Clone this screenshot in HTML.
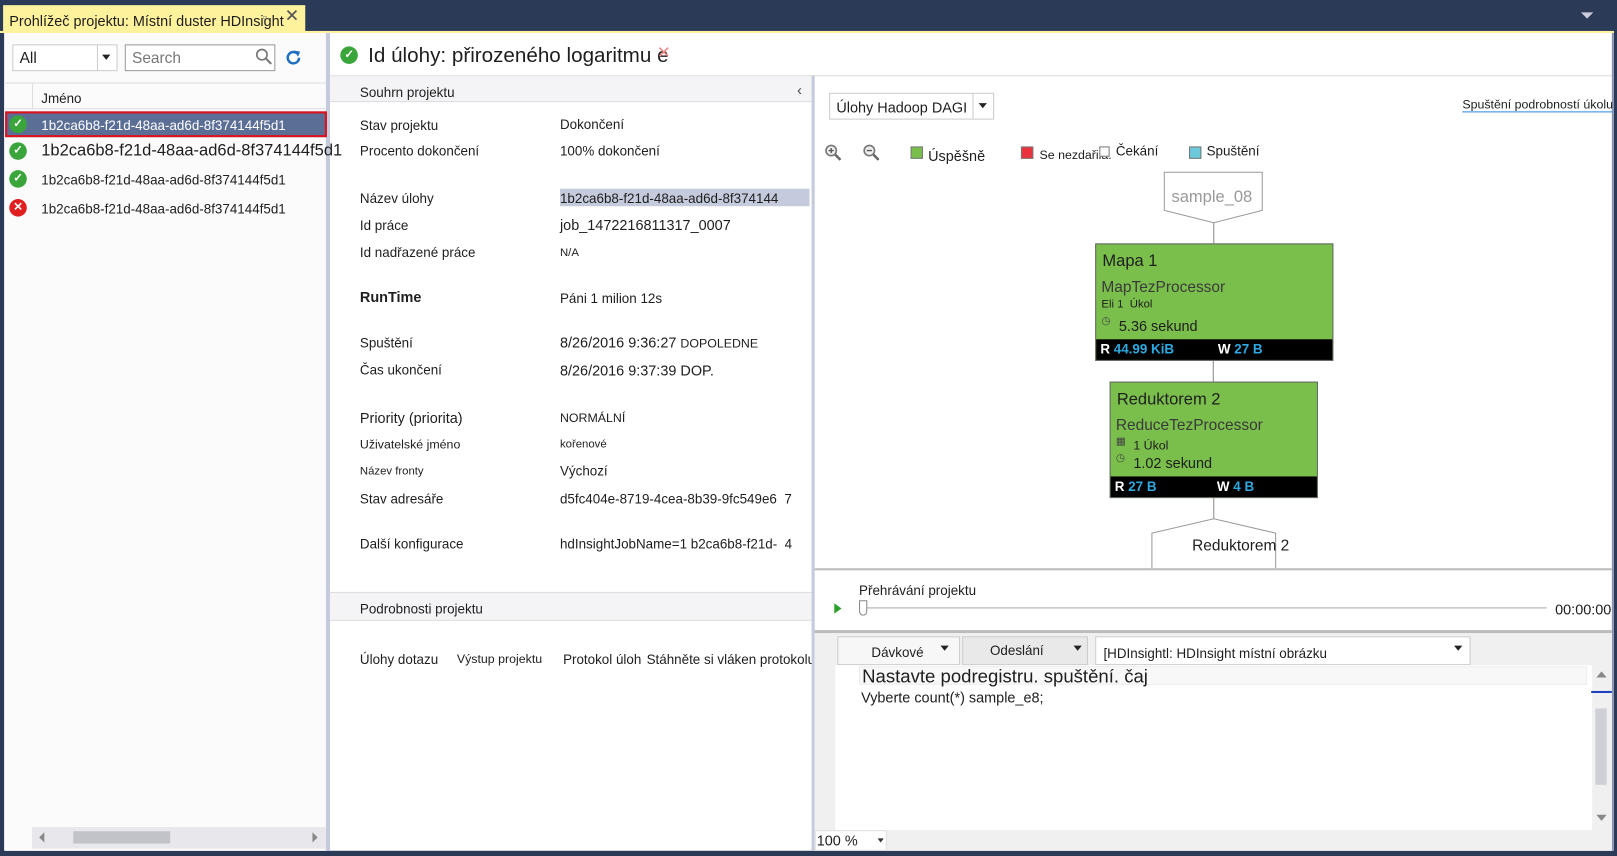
<!DOCTYPE html>
<html><head><meta charset="utf-8"><style>
*{margin:0;padding:0;box-sizing:border-box}
body{width:1617px;height:856px;background:#2b3a57;font-family:"Liberation Sans",sans-serif;font-size:13px;color:#1e1e1e;position:relative;overflow:hidden}
#w{position:absolute;left:0;top:0;width:1568px;height:830px;transform:scale(1.03125);transform-origin:0 0}
.a{position:absolute;white-space:nowrap}
.chk{position:absolute;width:17px;height:17px;border-radius:50%;background:#3aa53a;color:#fff;font-size:11px;text-align:center;line-height:17px;font-weight:bold}
.x{background:#e02020}
.lbl{position:absolute;left:349px;font-size:13px}
.val{position:absolute;left:543px;font-size:13px}
.node{position:absolute;background:#7abf4c;border:1px solid #666}
.bar{position:absolute;left:0;right:0;bottom:0;height:20px;background:#000;color:#fff;font-weight:bold;font-size:13px;line-height:20px}
.bar b{color:#2ea8e0}
</style></head><body><div id="w">
<div class="a" style="left:3px;top:5px;width:293px;height:27px;background:#fff29d"></div>
<div class="a" style="left:9px;top:12px;font-size:14px">Prohlížeč projektu: Místní duster HDInsight</div>
<div class="a" style="left:255px;top:10px;font-size:12px;color:#777">▫</div>
<div class="a" style="left:276px;top:6px;font-size:17px;color:#555">✕</div>
<div class="a" style="left:1533px;top:12px;width:0;height:0;border-left:6px solid transparent;border-right:6px solid transparent;border-top:6px solid #ccd"></div>
<div class="a" style="left:0;top:30px;width:1565px;height:2px;background:#fff29d"></div>
<div class="a" style="left:4px;top:32px;width:1561px;height:793px;background:#fff"></div>
<div class="a" style="left:5px;top:32px;width:311px;height:793px;background:#fbfbfb"></div>
<div class="a" style="left:316px;top:32px;width:4px;height:793px;background:#c5cbdd"></div>
<div class="a" style="left:12px;top:43px;width:102px;height:26px;border:1px solid #ccc;background:#fff"></div>
<div class="a" style="left:94px;top:44px;width:1px;height:24px;background:#ccc"></div>
<div class="a" style="left:19px;top:48px;font-size:15px">All</div>
<div class="a" style="left:99px;top:53px;border-left:4px solid transparent;border-right:4px solid transparent;border-top:5px solid #222"></div>
<div class="a" style="left:121px;top:43px;width:146px;height:26px;border:1px solid #999;background:#fff"></div>
<div class="a" style="left:128px;top:48px;font-size:15px;color:#777">Search</div>
<svg class="a" style="left:247px;top:46px" width="18" height="18"><circle cx="7" cy="7" r="5" fill="none" stroke="#777" stroke-width="1.6"/><line x1="11" y1="11" x2="16" y2="16" stroke="#777" stroke-width="2"/></svg>
<svg class="a" style="left:276px;top:47px" width="18" height="18"><path d="M14 9a5.5 5.5 0 1 1-2-4.3" fill="none" stroke="#1e6fc0" stroke-width="2.4"/><path d="M9 2l6 1-2 5z" fill="#1e6fc0"/></svg>
<div class="a" style="left:5px;top:80px;width:311px;height:1px;background:#ddd"></div>
<div class="a" style="left:31px;top:80px;width:1px;height:26px;background:#ddd"></div>
<div class="a" style="left:5px;top:105px;width:311px;height:1px;background:#ddd"></div>
<div class="a" style="left:40px;top:88px">Jméno</div>
<div class="a" style="left:5px;top:108px;width:312px;height:25px;background:#5b6e96;border:2px solid #e0101c"></div>
<div class="chk" style="left:9px;top:112px">✓</div>
<div class="a" style="left:40px;top:114px;color:#fff;font-size:13px">1b2ca6b8-f21d-48aa-ad6d-8f374144f5d1</div>
<div class="chk" style="left:9px;top:138px">✓</div>
<div class="a" style="left:40px;top:138px;font-size:16px">1b2ca6b8-f21d-48aa-ad6d-8f374144f5d1</div>
<div class="chk" style="left:9px;top:165px">✓</div>
<div class="a" style="left:40px;top:167px">1b2ca6b8-f21d-48aa-ad6d-8f374144f5d1</div>
<div class="chk x" style="left:9px;top:193px">✕</div>
<div class="a" style="left:40px;top:195px">1b2ca6b8-f21d-48aa-ad6d-8f374144f5d1</div>
<div class="a" style="left:31px;top:802px;width:285px;height:21px;background:#e8e8ec"></div>
<div class="a" style="left:71px;top:806px;width:94px;height:12px;background:#c2c3c9"></div>
<div class="a" style="left:38px;top:807px;border-top:5px solid transparent;border-bottom:5px solid transparent;border-right:5px solid #888"></div>
<div class="a" style="left:303px;top:807px;border-top:5px solid transparent;border-bottom:5px solid transparent;border-left:5px solid #888"></div>
<div class="chk" style="left:330px;top:45px">✓</div>
<div class="a" style="left:357px;top:43px;font-size:20px">Id úlohy: přirozeného logaritmu e</div>
<div class="a" style="left:637px;top:41px;color:#e88;font-size:16px">✕</div>
<div class="a" style="left:320px;top:73px;width:467px;height:1px;background:#ddd"></div>
<div class="a" style="left:320px;top:74px;width:467px;height:25px;background:#f4f4f6;border-bottom:1px solid #ddd"></div>
<div class="a" style="left:349px;top:82px">Souhrn projektu</div>
<div class="a" style="left:773px;top:79px;font-size:14px;color:#444">‹</div>
<div class="lbl" style="top:114px">Stav projektu</div><div class="val" style="top:113px">Dokončení</div>
<div class="lbl" style="top:139px">Procento dokončení</div><div class="val" style="top:139px">100% dokončení</div>
<div class="lbl" style="top:185px">Název úlohy</div><div class="a" style="left:543px;top:183px;width:242px;height:17px;background:#c5cbdd"></div><div class="val" style="top:185px">1b2ca6b8-f21d-48aa-ad6d-8f374144</div>
<div class="lbl" style="top:211px">Id práce</div><div class="val" style="top:210px;font-size:14px">job_1472216811317_0007</div>
<div class="lbl" style="top:237px">Id nadřazené práce</div><div class="val" style="top:239px;font-size:11px">N/A</div>
<div class="lbl" style="top:280px;font-weight:bold;font-size:14px">RunTime</div><div class="val" style="top:282px">Páni 1 milion 12s</div>
<div class="lbl" style="top:325px">Spuštění</div><div class="val" style="top:324px;font-size:14px">8/26/2016 9:36:27 <span style="font-size:12px">DOPOLEDNE</span></div>
<div class="lbl" style="top:351px">Čas ukončení</div><div class="val" style="top:351px;font-size:14px">8/26/2016 9:37:39 DOP.</div>
<div class="lbl" style="top:397px;font-size:14px">Priority (priorita)</div><div class="val" style="top:398px;font-size:12px">NORMÁLNÍ</div>
<div class="lbl" style="top:424px;font-size:12px">Uživatelské jméno</div><div class="val" style="top:425px;font-size:11px">kořenové</div>
<div class="lbl" style="top:451px;font-size:11px">Název fronty</div><div class="val" style="top:449px">Výchozí</div>
<div class="lbl" style="top:476px">Stav adresáře</div><div class="val" style="top:476px">d5fc404e-8719-4cea-8b39-9fc549e6 &nbsp;7</div>
<div class="lbl" style="top:520px">Další konfigurace</div><div class="val" style="top:520px">hdInsightJobName=1 b2ca6b8-f21d- &nbsp;4</div>
<div class="a" style="left:320px;top:574px;width:467px;height:28px;background:#f4f4f6;border-top:1px solid #ddd;border-bottom:1px solid #ddd"></div>
<div class="a" style="left:349px;top:583px">Podrobnosti projektu</div>
<div class="a" style="left:349px;top:632px">Úlohy dotazu</div>
<div class="a" style="left:443px;top:632px;font-size:12px">Výstup projektu</div>
<div class="a" style="left:546px;top:632px">Protokol úloh</div>
<div class="a" style="left:627px;top:632px">Stáhněte si vláken protokolu</div>
<div class="a" style="left:787px;top:73px;width:3px;height:752px;background:#c5cbdd"></div>
<div class="a" style="left:790px;top:73px;width:775px;height:1px;background:#ddd"></div>
<div class="a" style="left:1563px;top:32px;width:2px;height:793px;background:#8a94b0"></div>
<div class="a" style="left:804px;top:90px;width:160px;height:26px;border:1px solid #ccc"></div>
<div class="a" style="left:943px;top:91px;width:1px;height:24px;background:#ccc"></div>
<div class="a" style="left:811px;top:96px;font-size:14px">Úlohy Hadoop DAGI</div>
<div class="a" style="left:949px;top:100px;border-left:4px solid transparent;border-right:4px solid transparent;border-top:5px solid #222"></div>
<div class="a" style="left:1418px;top:94px;font-size:12px;border-bottom:1px solid #2e8ae0">Spuštění podrobností úkolu</div>
<svg class="a" style="left:799px;top:139px" width="18" height="18"><circle cx="7" cy="7" r="5" fill="#eee" stroke="#777" stroke-width="1.6"/><path d="M4.5 7h5M7 4.5v5" stroke="#555" stroke-width="1.3"/><line x1="11" y1="11" x2="16" y2="16" stroke="#666" stroke-width="2.4"/></svg>
<svg class="a" style="left:836px;top:139px" width="18" height="18"><circle cx="7" cy="7" r="5" fill="#eee" stroke="#777" stroke-width="1.6"/><path d="M4.5 7h5" stroke="#555" stroke-width="1.3"/><line x1="11" y1="11" x2="16" y2="16" stroke="#666" stroke-width="2.4"/></svg>
<div class="a" style="left:883px;top:142px;width:12px;height:12px;background:#7abf4c;border:1px solid #777"></div>
<div class="a" style="left:900px;top:143px;font-size:14px">Úspěšně</div>
<div class="a" style="left:990px;top:142px;width:12px;height:12px;background:#e8323c;border:1px solid #777"></div>
<div class="a" style="left:1008px;top:143px;font-size:12px">Se nezdařila.</div>
<div class="a" style="left:1066px;top:142px;width:10px;height:10px;background:#fff;border:1px solid #777"></div>
<div class="a" style="left:1082px;top:139px">Čekání</div>
<div class="a" style="left:1153px;top:142px;width:12px;height:12px;background:#6ccadc;border:1px solid #777"></div>
<div class="a" style="left:1170px;top:139px">Spuštění</div>
<svg class="a" style="left:1128px;top:166px" width="98" height="70"><path d="M1 1H96V38L49 50L1 38Z" fill="#fff" stroke="#999"/><line x1="49" y1="50" x2="49" y2="70" stroke="#888"/></svg>
<div class="a" style="left:1136px;top:183px;font-size:16px;color:#999">sample_08</div>
<div class="node" style="left:1062px;top:236px;width:231px;height:114px">
<div class="a" style="left:6px;top:8px;font-size:16px">Mapa 1</div>
<div class="a" style="left:5px;top:33px;font-size:15px;color:#3a3a3a">MapTezProcessor</div>
<div class="a" style="left:5px;top:52px;font-size:11px">Eli 1 &nbsp;Úkol</div>
<div class="a" style="left:5px;top:69px;font-size:10px;color:#444">◷</div>
<div class="a" style="left:22px;top:71px;font-size:14px">5.36 sekund</div>
<div class="bar"><span style="margin-left:4px">R <b>44.99 KiB</b></span><span style="position:absolute;left:118px">W <b>27 B</b></span></div>
</div>
<div class="a" style="left:1176px;top:350px;width:1px;height:20px;background:#888"></div>
<div class="node" style="left:1076px;top:370px;width:202px;height:113px">
<div class="a" style="left:6px;top:8px;font-size:16px">Reduktorem 2</div>
<div class="a" style="left:5px;top:33px;font-size:15px;color:#3a3a3a">ReduceTezProcessor</div>
<div class="a" style="left:5px;top:52px;font-size:10px;color:#444">▦</div>
<div class="a" style="left:22px;top:54px;font-size:12px">1 Úkol</div>
<div class="a" style="left:5px;top:68px;font-size:10px;color:#444">◷</div>
<div class="a" style="left:22px;top:70px;font-size:14px">1.02 sekund</div>
<div class="bar"><span style="margin-left:4px">R <b>27 B</b></span><span style="position:absolute;left:103px">W <b>4 B</b></span></div>
</div>
<svg class="a" style="left:1116px;top:483px" width="122" height="70"><line x1="61" y1="0" x2="61" y2="20" stroke="#888"/><path d="M1 68V34L61 20L121 34V68" fill="#fff" stroke="#999"/></svg>
<div class="a" style="left:1156px;top:521px;font-size:15px">Reduktorem 2</div>
<div class="a" style="left:790px;top:551px;width:773px;height:2px;background:#bbb"></div>
<div class="a" style="left:833px;top:565px">Přehrávání projektu</div>
<div class="a" style="left:809px;top:585px;border-top:5px solid transparent;border-bottom:5px solid transparent;border-left:7px solid #2ba02b"></div>
<div class="a" style="left:840px;top:589px;width:660px;height:1px;background:#aaa"></div>
<div class="a" style="left:833px;top:582px;width:8px;height:15px;border:1px solid #888;background:#fff;border-radius:0 0 4px 4px"></div>
<div class="a" style="left:1508px;top:583px;font-size:14px">00:00:00</div>
<div class="a" style="left:790px;top:611px;width:773px;height:3px;background:#bbb"></div>
<div class="a" style="left:790px;top:614px;width:773px;height:211px;background:#f0f0f0"></div>
<div class="a" style="left:812px;top:617px;width:119px;height:28px;background:#f7f7f7;border:1px solid #ccc"></div>
<div class="a" style="left:845px;top:625px">Dávkové</div>
<div class="a" style="left:912px;top:626px;border-left:4px solid transparent;border-right:4px solid transparent;border-top:5px solid #222"></div>
<div class="a" style="left:933px;top:617px;width:122px;height:28px;background:#e9e9e9;border:1px solid #ccc"></div>
<div class="a" style="left:960px;top:623px">Odeslání</div>
<div class="a" style="left:1041px;top:626px;border-left:4px solid transparent;border-right:4px solid transparent;border-top:5px solid #222"></div>
<div class="a" style="left:1062px;top:617px;width:364px;height:28px;background:#fff;border:1px solid #ccc"></div>
<div class="a" style="left:1070px;top:626px">[HDInsightl: HDInsight místní obrázku</div>
<div class="a" style="left:1410px;top:626px;border-left:4px solid transparent;border-right:4px solid transparent;border-top:5px solid #222"></div>
<div class="a" style="left:810px;top:645px;width:734px;height:160px;background:#fff"></div>
<div class="a" style="left:833px;top:646px;width:706px;height:18px;background:#f8f8f8;border:1px solid #eee"></div>
<div class="a" style="left:836px;top:646px;font-size:18px">Nastavte podregistru. spuštění. čaj</div>
<div class="a" style="left:835px;top:668px;font-size:14px">Vyberte count(*) sample_e8;</div>
<div class="a" style="left:1544px;top:645px;width:18px;height:160px;background:#f0f0f0"></div>
<div class="a" style="left:1547px;top:687px;width:11px;height:74px;background:#cfd0d6"></div>
<div class="a" style="left:1543px;top:670px;width:20px;height:2px;background:#2040c0"></div>
<div class="a" style="left:1548px;top:651px;border-left:5px solid transparent;border-right:5px solid transparent;border-bottom:6px solid #888"></div>
<div class="a" style="left:1548px;top:790px;border-left:5px solid transparent;border-right:5px solid transparent;border-top:6px solid #888"></div>
<div class="a" style="left:790px;top:805px;width:70px;height:20px;background:#fff;border:1px solid #ddd"></div>
<div class="a" style="left:792px;top:807px;font-size:14px">100 %</div>
<div class="a" style="left:851px;top:813px;border-left:3px solid transparent;border-right:3px solid transparent;border-top:4px solid #333"></div>
</div></body></html>
